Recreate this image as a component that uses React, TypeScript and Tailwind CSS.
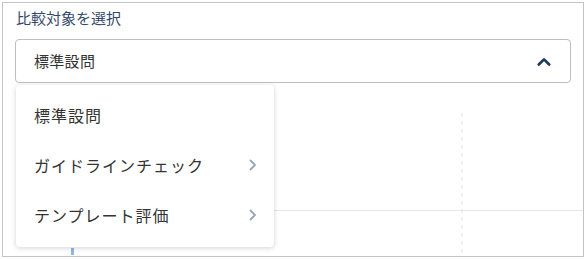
import React from "react";

const font = { fontFamily: '"Noto Sans CJK JP", "Noto Sans", sans-serif' };

function ChevronRight() {
  return (
    <svg width="8" height="12" viewBox="0 0 8 12" className="shrink-0">
      <path d="M1.5 1.5 L6 6 L1.5 10.5" fill="none" stroke="#9aa6b6" strokeWidth="1.8" strokeLinecap="round" strokeLinejoin="round" />
    </svg>
  );
}

function ChevronUp() {
  return (
    <svg width="14" height="9" viewBox="0 0 14 9">
      <path d="M1.8 7.5 L7 2.3 L12.2 7.5" fill="none" stroke="#1c3660" strokeWidth="2.6" strokeLinecap="round" strokeLinejoin="round" />
    </svg>
  );
}

export default function App() {
  const items = [
    { label: "標準設問", sub: false },
    { label: "ガイドラインチェック", sub: true },
    { label: "テンプレート評価", sub: true },
  ];
  return (
    <div className="w-[588px] h-[259px] bg-white pt-[2px] pl-[2px]" style={font}>
      <div className="w-[582px] h-[255px] border border-[#c4c4c4] px-[12px] flex flex-col overflow-hidden">
        <div className="pt-[5px] pl-[1px] text-[15px] leading-[20px] text-[#34496a]">比較対象を選択</div>
        <div className="relative mt-[11px]">
          <div className="h-[44px] border border-[#bdbdbd] rounded-[4px] flex items-center justify-between pl-[18px] pr-[19px]">
            <span className="text-[15px] text-[#333333] tracking-[0.3px]">標準設問</span>
            <ChevronUp />
          </div>
          <div className="absolute left-[1px] top-[calc(100%+2px)] w-[258px] bg-white rounded-[4px] shadow-[0_1px_5px_rgba(0,0,0,0.18)] pt-[5px] pb-[7px] z-10">
            {items.map((it) => (
              <div key={it.label} className="h-[50px] flex items-center justify-between pl-[18px] pr-[17px]">
                <span className="text-[16px] tracking-[1px] text-[#333333]">{it.label}</span>
                {it.sub && <ChevronRight />}
              </div>
            ))}
          </div>
        </div>
        <div className="flex-1 -mx-[12px] relative">
          <svg width="580" height="172" className="block">
            <line x1="459" y1="30" x2="459" y2="172" stroke="#e2e2e2" strokeWidth="1" strokeDasharray="4 4" />
            <line x1="268" y1="127.5" x2="580" y2="127.5" stroke="#e6e6e6" strokeWidth="1" />
            <rect x="68" y="165" width="3" height="8" fill="#8db6e6" />
          </svg>
        </div>
      </div>
    </div>
  );
}
